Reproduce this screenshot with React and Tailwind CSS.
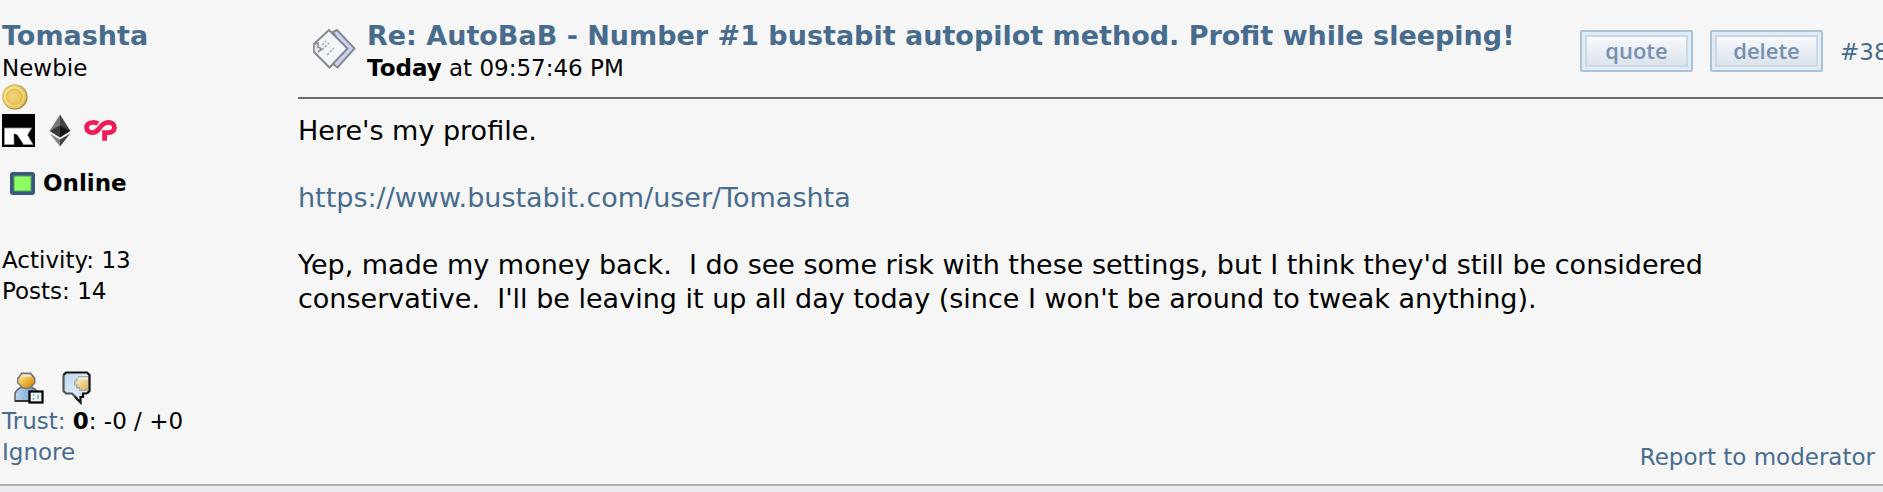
const linkClass = "text-[#476c8e] hover:underline";

function CoinIcon() {
  return (
    <svg width="26" height="26" viewBox="0 0 26 26" aria-hidden="true">
      <defs>
        <radialGradient id="coin" cx="45%" cy="45%" r="60%">
          <stop offset="0" stopColor="#f1cf86" />
          <stop offset="0.5" stopColor="#efcc66" />
          <stop offset="1" stopColor="#e6bd4c" />
        </radialGradient>
      </defs>
      <circle cx="13" cy="13" r="12.6" fill="#a98a3c" />
      <circle cx="12.2" cy="12.6" r="12" fill="#e3c566" />
      <circle cx="12" cy="12.6" r="10" fill="#f7e391" />
      <circle cx="12.4" cy="13" r="8.6" fill="#deb952" />
      <circle cx="12.2" cy="13.2" r="7.8" fill="url(#coin)" />
    </svg>
  );
}

function RoobetIcon() {
  return (
    <svg width="33" height="33" viewBox="0 0 33 33" aria-hidden="true">
      <rect width="33" height="33" fill="#000" />
      <path
        d="M2.500 14H29.500L25.500 21L31 30.500H21.500L15 20.500L12 20V30.500H2.500Z"
        fill="#fff"
        stroke="#999"
        strokeWidth="0.800"
      />
      <path d="M12 20L13.500 30.500H21L15 21Z" fill="#000" />
    </svg>
  );
}

function EthereumIcon() {
  return (
    <svg width="22" height="33" viewBox="0 0 22 33" aria-hidden="true">
      <path d="M11 0.5L0.5 17L11 12.5Z" fill="#777" />
      <path d="M11 0.5L21.5 17L11 12.5Z" fill="#444" />
      <path d="M11 11.5L0.5 17L11 23.5Z" fill="#393939" />
      <path d="M11 11.5L21.5 17L11 23.5Z" fill="#171717" />
      <path d="M0.8 19.5L11 25.5V32.5Z" fill="#858585" />
      <path d="M21.2 19.5L11 25.5V32.5Z" fill="#444" />
    </svg>
  );
}

function InfinityIcon() {
  return (
    <svg width="33" height="33" viewBox="0 0 33 33" aria-hidden="true">
      <path
        d="M14 9.600C12.500 8.600 10.500 8.200 8.500 8.400C4.600 8.600 2.600 10.800 2.600 13.500C2.600 16.600 5 18.600 8.400 18.600C12 18.600 13.600 16.800 15.600 14C18 10.400 20.200 8.400 24.400 8.400C28.200 8.400 30.400 10.600 30.400 13.500C30.400 16.600 28 18.600 24.600 18.600H20.600V26.800"
        fill="none"
        stroke="#f01c58"
        strokeWidth="4.800"
      />
    </svg>
  );
}

function OnlineIcon() {
  return (
    <svg width="25" height="23" viewBox="0 0 25 23" aria-hidden="true">
      <rect width="25" height="23" rx="3" fill="#39587a" />
      <rect x="3.5" y="3.5" width="18" height="16" fill="#5aa05c" />
      <rect x="4.5" y="4.5" width="16" height="14" fill="#8bff62" />
    </svg>
  );
}

function ProfileIcon() {
  return (
    <svg width="30" height="33" viewBox="0 0 30 33" aria-hidden="true">
      <defs>
        <linearGradient id="head" x1="0" y1="0" x2="1" y2="1">
          <stop offset="0" stopColor="#fff0a8" />
          <stop offset="0.5" stopColor="#efb83c" />
          <stop offset="1" stopColor="#c98008" />
        </linearGradient>
        <linearGradient id="shirt" x1="0" y1="0" x2="1" y2="0">
          <stop offset="0" stopColor="#b9d4ee" />
          <stop offset="1" stopColor="#6c9bcc" />
        </linearGradient>
      </defs>
      <path d="M1 30V22L3 19L7 16H17L21 18L23 21V30Z" fill="url(#shirt)" stroke="#686868" strokeWidth="1.600" />
      <path d="M1 30H16" stroke="#333" strokeWidth="2" />
      <path d="M7 1.500H17L20 5L21.500 7V12L19 15L16 18H9L6 15L3 12V7L5 5Z" fill="#777" />
      <path d="M8 3.500H16L18.500 6L20 8V11.500L15.500 16.500H9.500L4.500 11.500V8L6 6Z" fill="url(#head)" />
      <path d="M8 3.500H16L18 5.500L6.500 6Z" fill="#efeadb" />
      <rect x="15.500" y="20.500" width="13" height="11" fill="#eef5f4" stroke="#000" strokeWidth="2.200" />
      <path d="M19.500 23.500V25M19.500 27V29M24 23.500V28" stroke="#8db8b5" strokeWidth="1.600" />
    </svg>
  );
}

function MessageIcon() {
  return (
    <svg width="29" height="34" viewBox="0 0 29 34" aria-hidden="true">
      <defs>
        <linearGradient id="bubble" x1="0" y1="0" x2="1" y2="1">
          <stop offset="0" stopColor="#b9d5ef" />
          <stop offset="0.5" stopColor="#dbe9f3" />
          <stop offset="1" stopColor="#c8dcec" />
        </linearGradient>
        <linearGradient id="face" x1="0" y1="0" x2="1" y2="1">
          <stop offset="0" stopColor="#fff6cf" />
          <stop offset="1" stopColor="#d8b153" />
        </linearGradient>
      </defs>
      <path
        d="M4 1.500H25L27.500 4V20L25 22.500H21V26H18.500V31.500L15.500 28.500L13 25.500L10 22.500H4L1.500 20V4Z"
        fill="url(#bubble)"
      />
      <path d="M16 5H26V20H17V17.500H14V14.500H12V9.500H14V7.500H16Z" fill="#a3aaa9" />
      <path d="M17 6.500H26V18.500H18V16H15.500V13.500H13.500V10.500H15.500V8.500H17Z" fill="url(#face)" />
      <path d="M17 6.500H26V8.500H15.500Z" fill="#f1f1ea" />
      <path d="M1.500 4L4 1.500H25L27.500 4V20L25 22.500" fill="none" stroke="#111" strokeWidth="2.200" />
      <path d="M1.500 4V20L4 22.500H10L13 25.500" fill="none" stroke="#4d555c" strokeWidth="2.200" />
      <path d="M25 22.500H21V26H18.500V31.500L15.500 28.500L13 25.500" fill="none" stroke="#111" strokeWidth="2.200" />
    </svg>
  );
}

function PostIcon() {
  return (
    <svg width="43" height="40" viewBox="0 0 43 40" className="shrink-0" aria-hidden="true">
      <path d="M20 3L24 1L41.500 19.500L24.500 38.500L20 35L30 20Z" fill="#cdd1f5" stroke="#85888e" strokeWidth="2" />
      <path d="M1 15L16 1L34.500 19.500L16.500 38.500L1 23Z" fill="#f3f7fa" stroke="#85888e" strokeWidth="2" />
      <path d="M1 23V15L5 14V18L9 20L5 23" fill="#e3e8ec" stroke="#8a8e93" strokeWidth="1.600" />
      <path d="M9 16L13 12M9 21L16 14M14 26L21 19" stroke="#b4bbc4" strokeWidth="1.800" strokeDasharray="3 1" />
    </svg>
  );
}

function PostButton({ children }) {
  return (
    <button
      type="button"
      className="h-[42px] w-[113px] cursor-pointer rounded-xs border-2 border-[#abc3d9] bg-[#dfebf5] p-[3px]"
    >
      <span className="flex h-full items-center justify-center border-2 border-[#cbd9e7] bg-linear-to-b from-[#f8fafc] to-[#dbe3ec] pb-0.5 font-['Open_Sans',sans-serif] text-[22px] leading-none font-semibold text-[#7890b0]">
        {children}
      </span>
    </button>
  );
}

export default function App() {
  return (
    <div className="min-h-screen overflow-hidden bg-[#ebebf2] font-['DejaVu_Sans',Verdana,sans-serif] text-[23px] leading-[31px] text-black">
      <article className="flex border-b-2 border-[#b0b0b0] bg-[#f6f6f6] pt-[19px]">
        <aside className="flex w-[298px] shrink-0 flex-col pb-4 pl-0.5">
          <h2 className="text-[27px] leading-[34px] font-bold">
            <a href="#tomashta" className={linkClass}>Tomashta</a>
          </h2>
          <p>Newbie</p>
          <CoinIcon />
          <div className="mt-1 flex">
            <RoobetIcon />
            <span className="ml-3.5">
              <EthereumIcon />
            </span>
            <span className="ml-[13px]">
              <InfinityIcon />
            </span>
          </div>
          <p className="mt-[21px] ml-2 flex items-center gap-2 font-bold">
            <OnlineIcon />
            Online
          </p>
          <p className="mt-[46px]">Activity: 13</p>
          <p>Posts: 14</p>
          <div className="mt-16 ml-3 flex gap-[18px]">
            <a href="#profile" aria-label="View profile"><ProfileIcon /></a>
            <a href="#message" aria-label="Send message"><MessageIcon /></a>
          </div>
          <p className="mt-px">
            <a href="#trust" className={linkClass}>Trust:</a> <b>0</b>: -0 / +0
          </p>
          <p>
            <a href="#ignore" className={linkClass}>Ignore</a>
          </p>
        </aside>

        <div className="flex min-w-0 flex-1 flex-col">
          <header className="flex items-start border-b-2 border-[#6b6b6b] pb-[13px] pl-[15px]">
            <div className="mt-2.5">
              <PostIcon />
            </div>
            <div className="ml-[11px] min-w-0 flex-1">
              <h1 className="text-[27px] leading-[34px] font-bold">
                <a href="#post" className={linkClass}>
                  Re: AutoBaB - Number #1 bustabit autopilot method. Profit while sleeping!
                </a>
              </h1>
              <p>
                <b>Today</b> at 09:57:46 PM
              </p>
            </div>
            <div className="mt-[11px] flex shrink-0 items-center gap-[17px]">
              <PostButton>quote</PostButton>
              <PostButton>delete</PostButton>
              <a href="#38" className={`${linkClass} w-[43px] pt-0.5 whitespace-nowrap`}>#38</a>
            </div>
          </header>

          <div className="max-w-[1480px] pt-[15px] text-[27px] leading-[34px]">
            <p>Here's my profile.</p>
            <p className="mt-[33px]">
              <a href="#bustabit" className={linkClass}>https://www.bustabit.com/user/Tomashta</a>
            </p>
            <p className="mt-[33px]">
              Yep, made my money back.&nbsp; I do see some risk with these settings, but I think they'd still be considered
              conservative.&nbsp; I'll be leaving it up all day today (since I won't be around to tweak anything).
            </p>
          </div>

          <p className="mt-auto pr-2 pb-[11px] text-right">
            <a href="#report" className={linkClass}>Report to moderator</a>
          </p>
        </div>
      </article>
    </div>
  );
}
